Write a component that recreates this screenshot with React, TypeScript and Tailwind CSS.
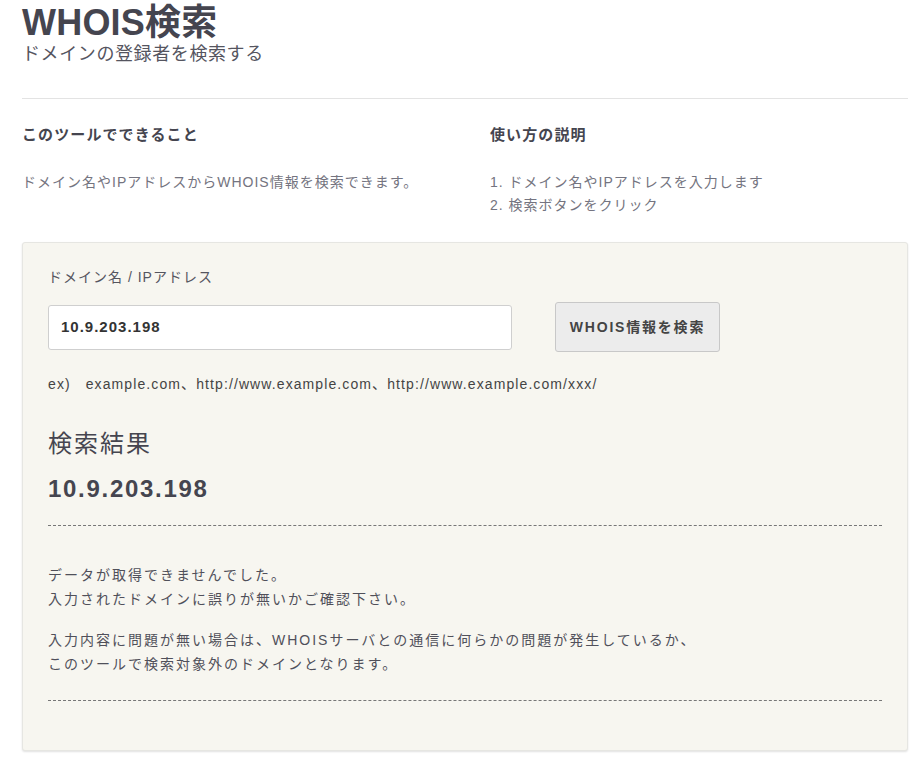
import React from "react";

export default function App() {
  const font = { fontFamily: '"Liberation Sans", "Noto Sans CJK JP", sans-serif' };
  return (
    <div className="min-h-[765px] bg-white text-[#45454f]" style={font}>
      <div className="pl-[22px] pr-[10px] pt-[3px]">
        <h1 className="text-[36px] font-bold leading-[40px] tracking-[0.2px] text-[#45454f]">WHOIS検索</h1>
        <p className="text-[18px] leading-[22px] tracking-[0.6px] text-[#55555f]">ドメインの登録者を検索する</p>
        <hr className="mt-[33px] border-t border-[#e3e3e3]" />
        <div className="grid grid-cols-[468px_1fr] pt-[26px]">
          <div>
            <h2 className="text-[15px] font-bold leading-[20px] tracking-[1.1px] text-[#45454f]">このツールでできること</h2>
            <p className="mt-[26px] text-[14px] leading-[23px] tracking-[1px] text-[#747480]">ドメイン名やIPアドレスからWHOIS情報を検索できます。</p>
          </div>
          <div>
            <h2 className="text-[15px] font-bold leading-[20px] tracking-[1.1px] text-[#45454f]">使い方の説明</h2>
            <ol className="mt-[26px] text-[14px] leading-[23px] tracking-[1px] text-[#747480]">
              <li>1. ドメイン名やIPアドレスを入力します</li>
              <li>2. 検索ボタンをクリック</li>
            </ol>
          </div>
        </div>
        <div className="mt-[25px] rounded-[3px] border border-[#e6e6e2] bg-[#f7f6f0] px-[25px] pt-[23px] pb-[49px] shadow-[0_1px_2px_rgba(0,0,0,0.12)]">
          <label className="block text-[14px] leading-[22px] tracking-[1px] text-[#55555f]">ドメイン名 / IPアドレス</label>
          <div className="mt-[14px] flex h-[50px] items-center gap-[43px]">
            <div className="flex h-[45px] w-[464px] items-center rounded-[3px] border border-[#cfcfcf] bg-white px-[12px]">
              <span className="text-[15px] font-bold tracking-[1px] text-[#333]">10.9.203.198</span>
            </div>
            <button className="h-[50px] w-[165px] rounded-[3px] border border-[#c8c8c8] bg-[#ececec] text-[14px] font-bold tracking-[1.8px] text-[#444]">
              WHOIS情報を検索
            </button>
          </div>
          <p className="mt-[21px] text-[14px] leading-[22px] tracking-[1.1px] text-[#444]">
            ex)&nbsp;&nbsp;&nbsp;example.com、http://www.example.com、http://www.example.com/xxx/
          </p>
          <h3 className="mt-[33px] text-[24px] leading-[32px] tracking-[2px] text-[#45454f]">検索結果</h3>
          <p className="mt-[13px] text-[24px] font-bold leading-[32px] tracking-[1.7px] text-[#45454f]">10.9.203.198</p>
          <div className="mt-[20px] border-t border-dashed border-[#777]" />
          <div className="mt-[37px] text-[14px] leading-[24px] tracking-[2px] text-[#50505a]">
            <p>データが取得できませんでした。</p>
            <p>入力されたドメインに誤りが無いかご確認下さい。</p>
            <p className="mt-[17px]">入力内容に問題が無い場合は、WHOISサーバとの通信に何らかの問題が発生しているか、</p>
            <p>このツールで検索対象外のドメインとなります。</p>
          </div>
          <div className="mt-[24px] border-t border-dashed border-[#777]" />
        </div>
      </div>
    </div>
  );
}
